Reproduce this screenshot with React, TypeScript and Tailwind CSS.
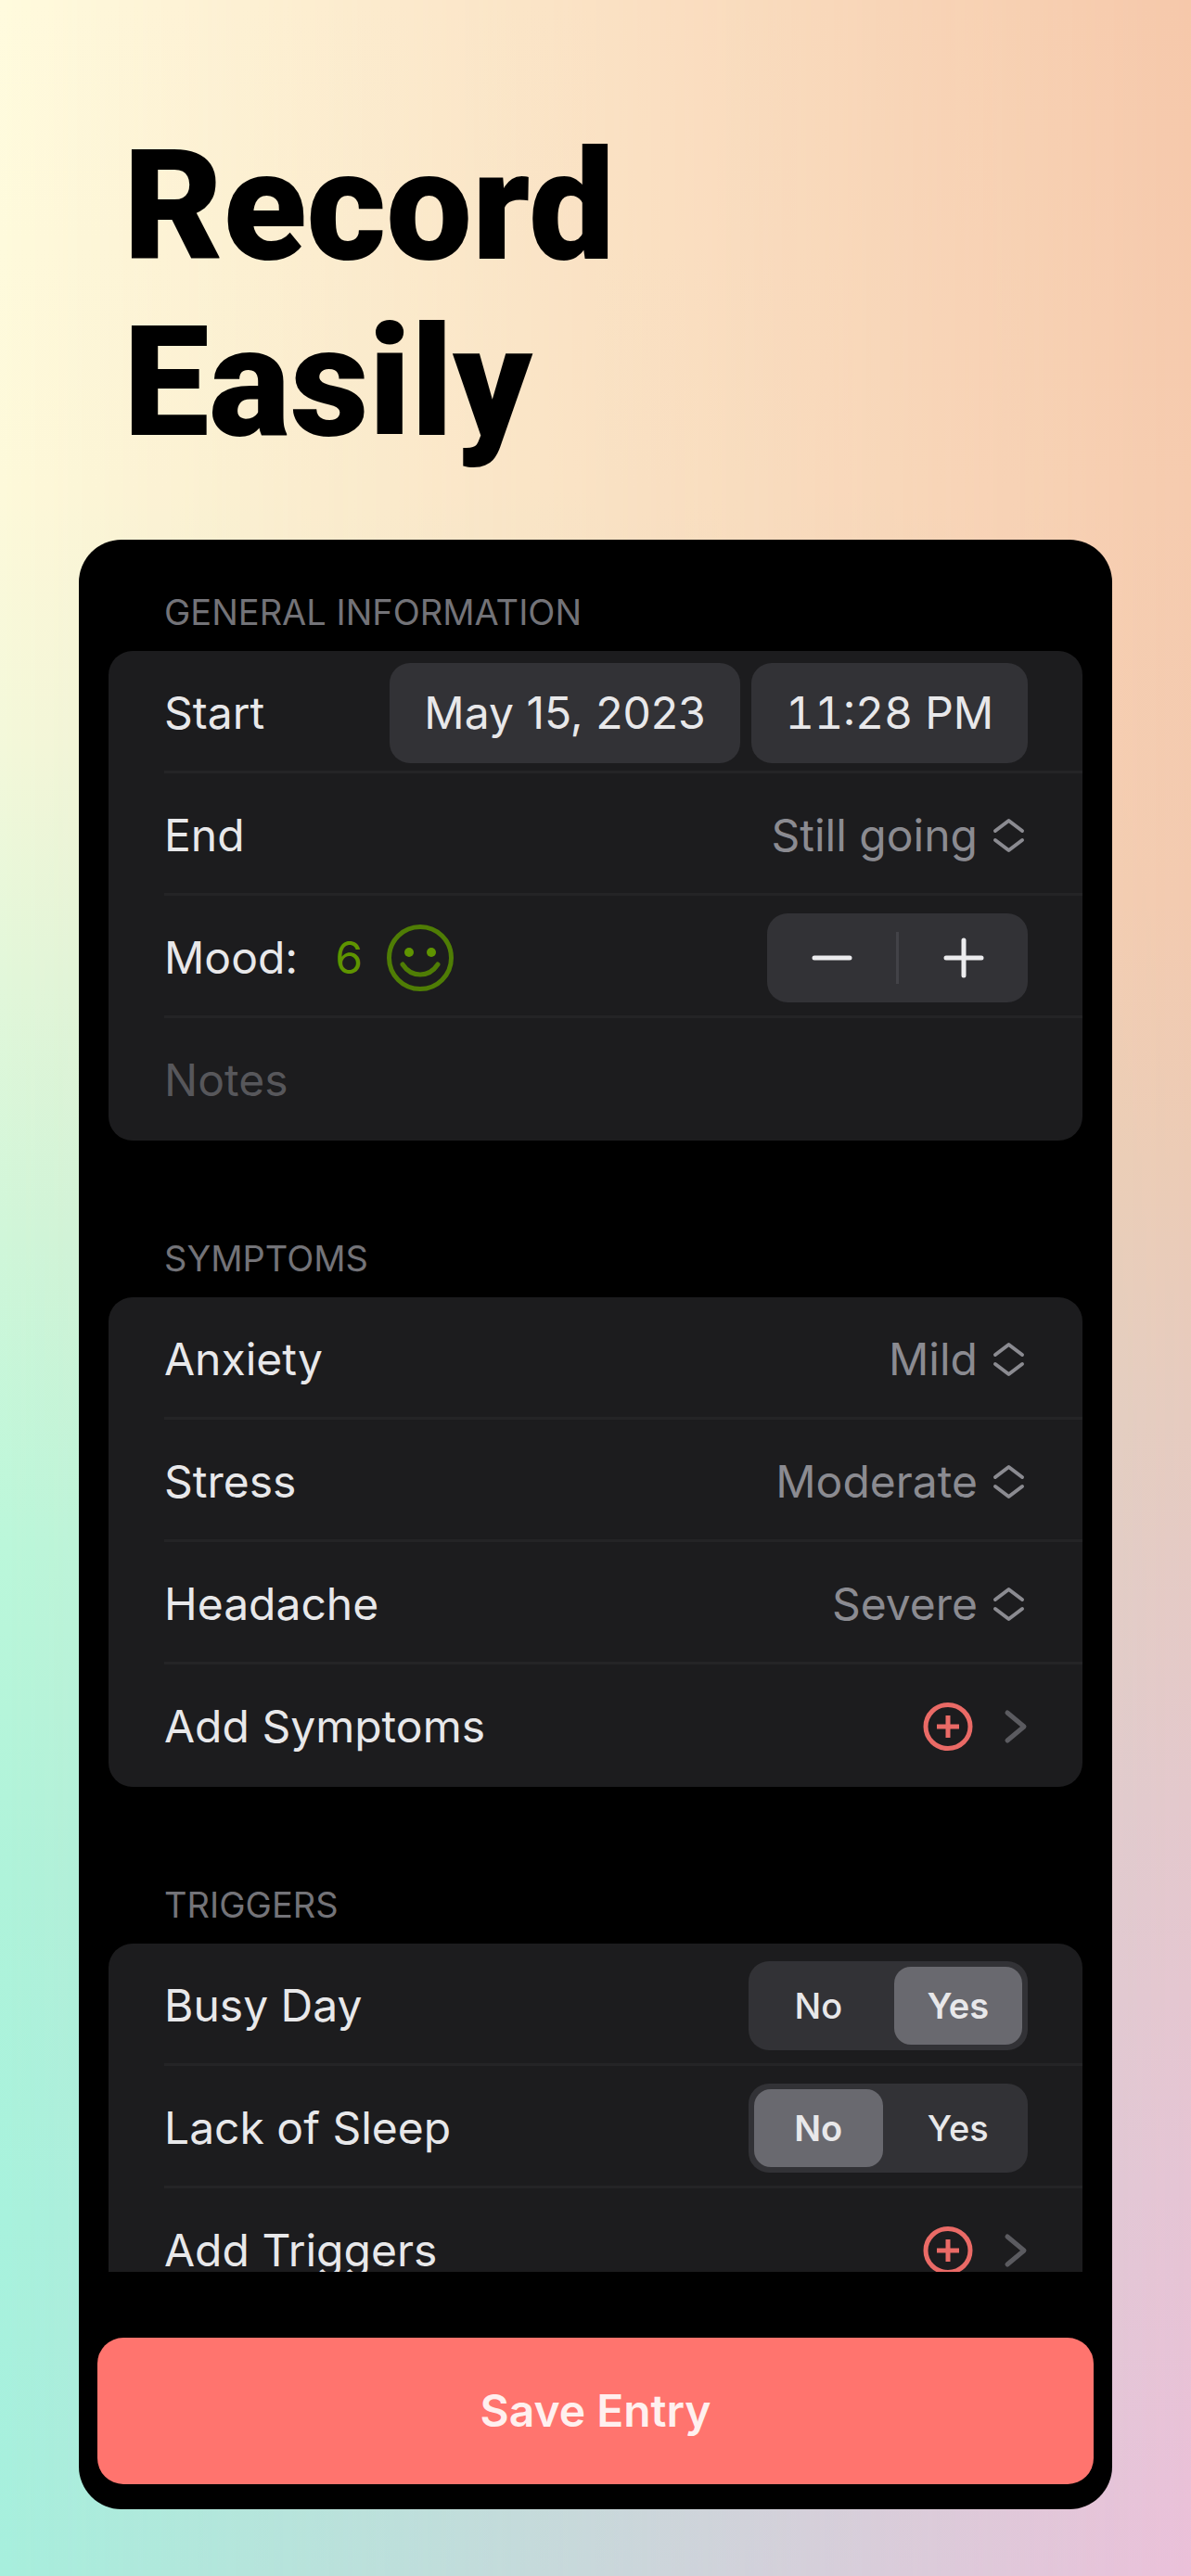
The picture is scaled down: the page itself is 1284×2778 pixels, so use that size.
import { useState, type ReactNode } from "react";

const ink = "text-[#e8e8ea]";

const Section = ({ title, children }: { title: string; children: ReactNode }) => (
  <section>
    <h2 className="mb-[21px] ml-15 text-[38px] leading-[42px] text-[#737378]">{title}</h2>
    <div className="overflow-hidden rounded-[26px] bg-[#1c1c1e]">{children}</div>
  </section>
);

const Row = ({ children }: { children: ReactNode }) => (
  <div className="group ml-15">
    <div className="flex h-33 items-center justify-between border-b-3 border-[#242426] pt-1 pr-[59px] group-last:border-transparent">
      {children}
    </div>
  </div>
);

const UpDown = () => (
  <svg className="pointer-events-none h-10 w-10" viewBox="0 0 40 40" fill="none" stroke="currentColor" strokeWidth="4" strokeLinecap="round" strokeLinejoin="round">
    <path d="M5 15 19.500 4 34 15M5 25l14.500 11L34 25" />
  </svg>
);

const Picker = ({ id, label, value, options }: { id: string; label: string; value: string; options: string[] }) => (
  <Row>
    <label htmlFor={id} className={ink}>{label}</label>
    <div className="flex items-center gap-[14px] text-[#8b8b91]">
      <select id={id} defaultValue={value} className="appearance-none bg-transparent text-right [field-sizing:content]">
        {options.map((option) => (
          <option key={option}>{option}</option>
        ))}
      </select>
      <UpDown />
    </div>
  </Row>
);

const AddRow = ({ label }: { label: string }) => (
  <Row>
    <button type="button" className={`flex flex-1 items-center ${ink}`}>
      <span className="flex-1 text-left">{label}</span>
      <svg className="h-14 w-14" viewBox="0 0 56 56" fill="none" stroke="#ea6a66" strokeWidth="5">
        <ellipse cx="28" cy="28" rx="24" ry="23.500" />
        <path d="M28 16v24M16 28h24" />
      </svg>
      <svg className="ml-8 h-10 w-[26px]" viewBox="0 0 26 40" fill="none" stroke="#5b5b60" strokeWidth="5" strokeLinecap="round" strokeLinejoin="round">
        <path d="M4 5l18 15L4 35" />
      </svg>
    </button>
  </Row>
);

const Toggle = ({ name, label, initial }: { name: string; label: string; initial: string }) => {
  const [value, setValue] = useState(initial);

  return (
    <Row>
      <span id={name} className={ink}>{label}</span>
      <div role="radiogroup" aria-labelledby={name} className="grid h-24 w-[301px] grid-cols-2 gap-3 rounded-[22px] bg-[#323236] p-[6px] text-[38px] font-medium text-[#e8e8ea]">
        {["No", "Yes"].map((option) => (
          <label key={option} className="flex items-center justify-center rounded-[18px] has-checked:bg-[#69696f] has-checked:font-semibold">
            <input type="radio" name={name} checked={value === option} onChange={() => setValue(option)} className="sr-only" />
            {option}
          </label>
        ))}
      </div>
    </Row>
  );
};

const App = () => {
  const [mood, setMood] = useState(6);
  const levels = ["None", "Mild", "Moderate", "Severe"];

  return (
    <main className='relative isolate min-h-screen overflow-hidden px-[85px] pt-32 pb-18 font-["Inter",sans-serif]'>
      <div className="absolute inset-0 -z-20 bg-[linear-gradient(to_bottom,#fffbde_0%,#fdf9da_19%,#f3f8da_29%,#e2f7da_38%,#d0f6d9_48%,#bbf7da_60%,#aff3da_73%,#a8f2dd_86%,#a7efdd_100%)]" />
      <div className="absolute inset-0 -z-10 bg-[linear-gradient(to_bottom,#f6c8aa_0%,#f6cbae_19%,#f3caaf_35%,#eccbb5_45%,#e6cbbf_55%,#e4c8cc_70%,#e6c4d4_85%,#ebc0d9_100%)] [mask-image:linear-gradient(to_right,transparent,black)]" />

      <h1 className='ml-12 font-["Roboto",sans-serif] text-[165px] leading-[190px] font-black text-black'>
        Record
        <br />
        Easily
      </h1>

      <div className="mt-[74px] rounded-[46px] bg-black pb-[27px] text-[48px] leading-[60px]">
        <div className="flex h-[1868px] flex-col gap-[106px] overflow-hidden px-8 pt-[57px]">
          <Section title="GENERAL INFORMATION">
            <Row>
              <span className={ink}>Start</span>
              <div className="flex gap-3 text-[#e8e8ea]">
                <button type="button" className="h-27 w-[378px] rounded-[22px] bg-[#323236]">May 15, 2023</button>
                <button type="button" className="h-27 w-[298px] rounded-[22px] bg-[#323236] tabular-nums">11:28 PM</button>
              </div>
            </Row>
            <Picker id="end" label="End" value="Still going" options={["Still going", "Ended"]} />
            <Row>
              <div className={`flex items-center ${ink}`}>
                <span>Mood:</span>
                <output className="ml-10 text-[#5f9400]">{mood}</output>
                <svg className="ml-[26px] h-18 w-18" viewBox="0 0 72 72" fill="none" stroke="#4f7d05" strokeWidth="5" strokeLinecap="round">
                  <circle cx="36" cy="36" r="33.500" />
                  <path d="M17 43c5 7.500 11 11 19 11s14-3.500 19-11" />
                  <circle cx="24" cy="30" r="5" fill="#5f9400" stroke="none" />
                  <circle cx="48" cy="30" r="5" fill="#5f9400" stroke="none" />
                </svg>
              </div>
              <div className="flex h-24 w-[281px] items-center rounded-[22px] bg-[#323236] text-[#ececee]">
                <button type="button" aria-label="Decrease mood" onClick={() => setMood(mood - 1)} className="flex flex-1 justify-center">
                  <svg className="h-11 w-11" viewBox="0 0 44 44" stroke="currentColor" strokeWidth="5" strokeLinecap="round">
                    <path d="M3 22h38" />
                  </svg>
                </button>
                <span className="h-14 w-[3px] bg-[#434348]" />
                <button type="button" aria-label="Increase mood" onClick={() => setMood(mood + 1)} className="flex flex-1 justify-center">
                  <svg className="h-11 w-11" viewBox="0 0 44 44" stroke="currentColor" strokeWidth="5" strokeLinecap="round">
                    <path d="M3 22h38M22 3v38" />
                  </svg>
                </button>
              </div>
            </Row>
            <Row>
              <input type="text" aria-label="Notes" placeholder="Notes" className="w-full bg-transparent text-[#e8e8ea] placeholder:text-[#57575b]" />
            </Row>
          </Section>

          <Section title="SYMPTOMS">
            <Picker id="anxiety" label="Anxiety" value="Mild" options={levels} />
            <Picker id="stress" label="Stress" value="Moderate" options={levels} />
            <Picker id="headache" label="Headache" value="Severe" options={levels} />
            <AddRow label="Add Symptoms" />
          </Section>

          <Section title="TRIGGERS">
            <Toggle name="busy-day" label="Busy Day" initial="Yes" />
            <Toggle name="lack-of-sleep" label="Lack of Sleep" initial="No" />
            <AddRow label="Add Triggers" />
          </Section>
        </div>

        <div className="px-5 pt-[71px]">
          <button type="button" className="h-[158px] w-full rounded-[28px] bg-[#ff746e] font-semibold text-[#fff0ef]">Save Entry</button>
        </div>
      </div>
    </main>
  );
};

export default App;
